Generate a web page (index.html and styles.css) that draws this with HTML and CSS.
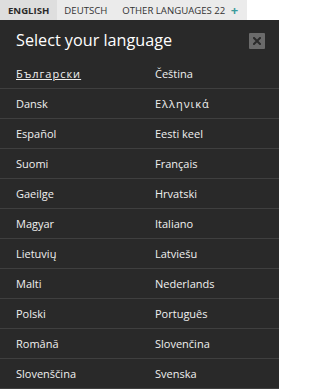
FILE: index.html
```html
<!DOCTYPE html>
<html lang="en">
<head>
<meta charset="utf-8">
<title>Select your language</title>
<link rel="stylesheet" href="styles.css">
</head>
<body>
<nav class="tabs">
  <a class="tab active" href="#">ENGLISH</a>
  <a class="tab" href="#">DEUTSCH</a>
  <a class="tab other" href="#">OTHER LANGUAGES 22 <span class="plus">+</span></a>
</nav>
<section class="panel">
  <header class="panel-head">
    <h1 class="title">Select your language</h1>
    <button class="close" aria-label="Close">
      <svg width="8" height="8" viewBox="0 0 8 8"><path d="M1 1L7 7M7 1L1 7" stroke="#2b2b2b" stroke-width="2" stroke-linecap="square"/></svg>
    </button>
  </header>
  <ul class="langs">
    <li><a class="current alt-script" lang="bg" href="#">Български</a></li>
    <li><a href="#">Čeština</a></li>
    <li><a href="#">Dansk</a></li>
    <li><a class="alt-script" lang="el" href="#">Ελληνικά</a></li>
    <li><a href="#">Español</a></li>
    <li><a href="#">Eesti keel</a></li>
    <li><a href="#">Suomi</a></li>
    <li><a href="#">Français</a></li>
    <li><a href="#">Gaeilge</a></li>
    <li><a href="#">Hrvatski</a></li>
    <li><a href="#">Magyar</a></li>
    <li><a href="#">Italiano</a></li>
    <li><a href="#">Lietuvių</a></li>
    <li><a href="#">Latviešu</a></li>
    <li><a href="#">Malti</a></li>
    <li><a href="#">Nederlands</a></li>
    <li><a href="#">Polski</a></li>
    <li><a href="#">Português</a></li>
    <li><a href="#">Română</a></li>
    <li><a href="#">Slovenčina</a></li>
    <li><a href="#">Slovenščina</a></li>
    <li><a href="#">Svenska</a></li>
  </ul>
</section>
</body>
</html>
```
FILE: styles.css
```css
html, body {
  margin: 0;
  padding: 0;
  background: #ffffff;
}
body {
  font-family: "Open Sans", "Noto Sans", sans-serif;
  overflow: hidden;
}
.tabs {
  display: flex;
  width: 247px;
  height: 20px;
  background: #ebebeb;
}
.tab {
  display: flex;
  align-items: center;
  padding: 0 7px;
  font-size: 9.6px;
  color: #333333;
  text-decoration: none;
  white-space: pre;
}
.tab.active {
  background: #dedede;
  font-weight: 700;
  padding: 0 8px;
  color: #2a2a2a;
}
.tab.other {
  padding-left: 8px;
}
.plus {
  color: #3a9b9b;
  font-size: 13px;
  font-weight: 700;
  margin-left: 3px;
  line-height: 1;
}
.panel {
  width: 279px;
  height: 369px;
  background: #292929;
}
.panel-head {
  display: flex;
  align-items: center;
  justify-content: space-between;
  height: 39px;
  padding: 0 14px 0 16px;
  box-sizing: border-box;
}
.title {
  margin: 0;
  font-size: 16.2px;
  font-weight: 400;
  color: #ffffff;
  line-height: 1;
  padding-top: 2px;
}
.close {
  width: 16px;
  height: 16px;
  padding: 0;
  border: 0;
  border-radius: 1px;
  background: #6b6b6b;
  display: flex;
  align-items: center;
  justify-content: center;
  margin-top: 2px;
}
.langs {
  list-style: none;
  margin: 0;
  padding: 0;
  display: grid;
  grid-template-columns: 139px 140px;
}
.langs li {
  height: 29px;
  border-bottom: 1px solid #3f3f3f;
  display: flex;
  align-items: center;
  padding-left: 16px;
}
.langs a {
  font-size: 11px;
  color: #f0f0f0;
  text-decoration: none;
}
.langs a.alt-script {
  letter-spacing: 1px;
}
.langs a.current {
  text-decoration: underline;
}
```
